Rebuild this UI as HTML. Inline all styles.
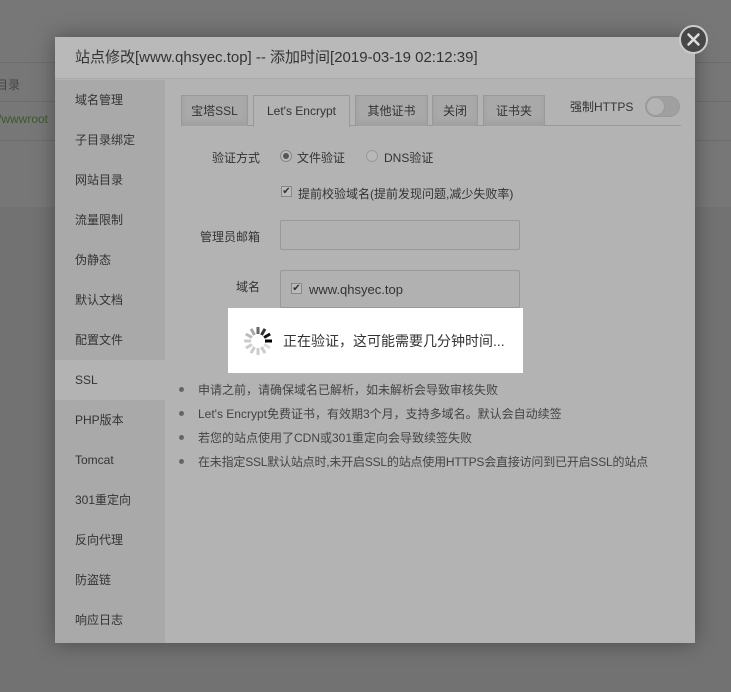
<!DOCTYPE html>
<html><head><meta charset="utf-8"><style>
*{margin:0;padding:0;box-sizing:border-box}
body{width:731px;height:692px;overflow:hidden;background:#727272;font-family:"Liberation Sans","Noto Sans CJK SC",sans-serif;font-size:12px;color:#333;position:relative}
.abs{position:absolute}
.dlg{left:55px;top:37px;width:640px;height:606px;background:#b3b3b3;box-shadow:0 0 20px rgba(0,0,0,.35)}
.title{left:0;top:0;width:640px;height:42px;background:#b9b9b9;font-size:15px;line-height:42px;padding-left:20px;color:#333;border-bottom:1px solid #aaa}
.side{left:0;top:43px;width:110px;height:563px;background:#a9a9a9}
.side div{height:40px;line-height:40px;padding-left:20px;font-size:12px;color:#333}
.side .on{background:#b3b3b3}
.tab{top:58px;height:31px;border:1px solid #999;border-bottom:none;background:#a9a9a9;line-height:30px;text-align:center;font-size:12px;color:#333;box-shadow:inset 0 -4px 6px rgba(0,0,0,.06)}
.tab.on{background:#b3b3b3;height:32px;box-shadow:none}
.lbl{text-align:right;width:80px;font-size:12px}
.inp{border:1px solid #999;background:#b1b1b1;border-radius:2px}
li{list-style:none;height:24px;line-height:24px;color:#444}
li:before{content:"";display:inline-block;width:5px;height:5px;border-radius:50%;background:#666;margin:0 14px 2px 2px;vertical-align:middle}
</style></head><body>
<div class="abs" style="left:0;top:0;width:731px;height:207px;background:#777"></div>
<div class="abs" style="left:0;top:62px;width:731px;height:1px;background:#6c6c6c"></div>
<div class="abs" style="left:0;top:101px;width:731px;height:1px;background:#6c6c6c"></div>
<div class="abs" style="left:0;top:140px;width:731px;height:1px;background:#6c6c6c"></div>
<div class="abs" style="left:-4px;top:76px;color:#444">目录</div>
<div class="abs" style="left:-2px;top:112px;color:#3a5a2a">/wwwroot</div>

<div class="abs dlg">
 <div class="abs title">站点修改[www.qhsyec.top] -- 添加时间[2019-03-19 02:12:39]</div>
 <div class="abs side">
  <div>域名管理</div><div>子目录绑定</div><div>网站目录</div><div>流量限制</div><div>伪静态</div><div>默认文档</div><div>配置文件</div><div class="on">SSL</div><div>PHP版本</div><div>Tomcat</div><div>301重定向</div><div>反向代理</div><div>防盗链</div><div>响应日志</div>
 </div>
 <div class="abs" style="left:126px;top:88px;width:500px;height:1px;background:#999"></div>
 <div class="abs tab" style="left:126px;width:67px">宝塔SSL</div>
 <div class="abs tab on" style="left:198px;width:97px">Let's Encrypt</div>
 <div class="abs tab" style="left:300px;width:73px">其他证书</div>
 <div class="abs tab" style="left:377px;width:46px">关闭</div>
 <div class="abs tab" style="left:428px;width:62px">证书夹</div>
 <div class="abs" style="left:515px;top:61px;font-size:12px">强制HTTPS</div>
 <div class="abs" style="left:590px;top:59px;width:35px;height:21px;border-radius:11px;background:#a0a0a0;border:1px solid #9a9a9a"></div>
 <div class="abs" style="left:591px;top:60px;width:19px;height:19px;border-radius:50%;background:#b3b3b3;border:1px solid #999"></div>

 <div class="abs lbl" style="left:125px;top:112px">验证方式</div>
 <div class="abs" style="left:225px;top:113px;width:12px;height:12px;border-radius:50%;border:1px solid #888;background:#bbb"><div style="margin:2px;width:6px;height:6px;border-radius:50%;background:#555"></div></div>
 <div class="abs" style="left:242px;top:112px">文件验证</div>
 <div class="abs" style="left:311px;top:113px;width:12px;height:12px;border-radius:50%;border:1px solid #999;background:#b8b8b8"></div>
 <div class="abs" style="left:329px;top:112px">DNS验证</div>
 <div class="abs" style="left:226px;top:149px;width:11px;height:11px;border:1px solid #888;background:#bbb;font-size:10px;line-height:9px;text-align:center">✔</div>
 <div class="abs" style="left:243px;top:148px">提前校验域名(提前发现问题,减少失败率)</div>

 <div class="abs lbl" style="left:125px;top:191px">管理员邮箱</div>
 <div class="abs inp" style="left:225px;top:183px;width:240px;height:30px"></div>
 <div class="abs lbl" style="left:125px;top:241px">域名</div>
 <div class="abs inp" style="left:225px;top:233px;width:240px;height:38px"></div>
 <div class="abs" style="left:236px;top:246px;width:11px;height:11px;border:1px solid #888;background:#bbb;font-size:10px;line-height:9px;text-align:center">✔</div>
 <div class="abs" style="left:254px;top:245px;font-size:13px">www.qhsyec.top</div>

 <ul class="abs" style="left:122px;top:341px;font-size:12px">
  <li>申请之前，请确保域名已解析，如未解析会导致审核失败</li>
  <li>Let's Encrypt免费证书，有效期3个月，支持多域名。默认会自动续签</li>
  <li>若您的站点使用了CDN或301重定向会导致续签失败</li>
  <li style="letter-spacing:-0.2px">在未指定SSL默认站点时,未开启SSL的站点使用HTTPS会直接访问到已开启SSL的站点</li>
 </ul>
</div>

<div class="abs" style="left:228px;top:308px;width:295px;height:65px;background:#fff"></div>
<svg class="abs" style="left:242px;top:325px" width="32" height="32" viewBox="-16 -16 32 32">
 <g stroke-width="3" stroke-linecap="butt">
  <line x1="0" y1="-7" x2="0" y2="-14" stroke="#aaa" transform="rotate(-30)"/>
  <line x1="0" y1="-7" x2="0" y2="-14" stroke="#666" transform="rotate(0)"/>
  <line x1="0" y1="-7" x2="0" y2="-14" stroke="#333" transform="rotate(30)"/>
  <line x1="0" y1="-7" x2="0" y2="-14" stroke="#111" transform="rotate(60)"/>
  <line x1="0" y1="-7" x2="0" y2="-14" stroke="#000" transform="rotate(90)"/>
  <line x1="0" y1="-7" x2="0" y2="-14" stroke="#ddd" transform="rotate(120)"/>
  <line x1="0" y1="-7" x2="0" y2="-14" stroke="#ccc" transform="rotate(150)"/>
  <line x1="0" y1="-7" x2="0" y2="-14" stroke="#ccc" transform="rotate(180)"/>
  <line x1="0" y1="-7" x2="0" y2="-14" stroke="#ccc" transform="rotate(210)"/>
  <line x1="0" y1="-7" x2="0" y2="-14" stroke="#ccc" transform="rotate(240)"/>
  <line x1="0" y1="-7" x2="0" y2="-14" stroke="#ccc" transform="rotate(270)"/>
  <line x1="0" y1="-7" x2="0" y2="-14" stroke="#bbb" transform="rotate(300)"/>
 </g>
</svg>
<div class="abs" style="left:283px;top:331px;font-size:14px;color:#333">正在验证，这可能需要几分钟时间...</div>

<div class="abs" style="left:679px;top:25px;width:29px;height:29px;border-radius:50%;background:#474747;border:2px solid #ccc"></div>
<svg class="abs" style="left:679px;top:25px" width="29" height="29"><path d="M9.5 9.5L19.5 19.5M19.5 9.5L9.5 19.5" stroke="#ddd" stroke-width="2.5" stroke-linecap="round"/></svg>
</body></html>
